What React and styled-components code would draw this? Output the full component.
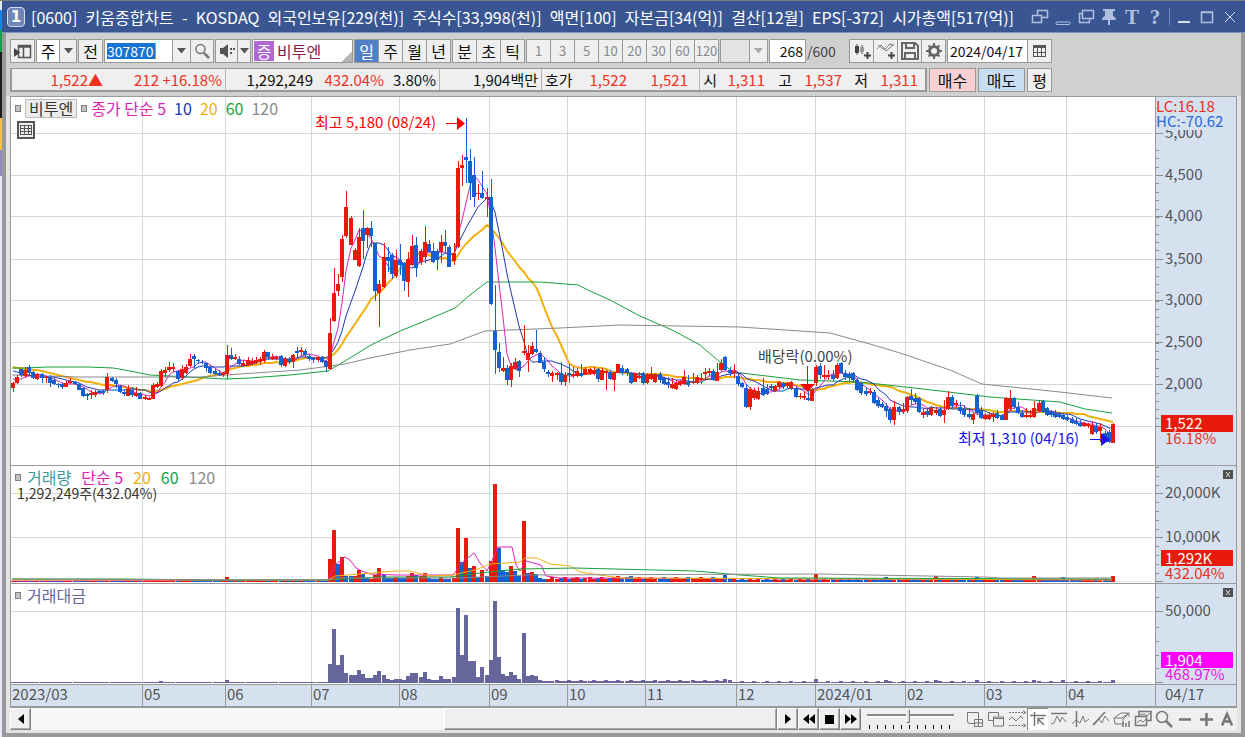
import React, { useState } from "react";
import styled, { createGlobalStyle, css } from "styled-components";

const GlobalStyle = createGlobalStyle`
  * {
    box-sizing: border-box;
  }
  body {
    margin: 0;
    background: #9a9a9a;
  }
  body, button, input, select {
    font-family: "Noto Sans CJK KR", sans-serif;
    font-size: 16px;
    line-height: 20px;
  }
`;

const RED = "#e81a0c";
const BLUE = "#1560d0";
const MAGENTA = "#e022b8";
const NAVY = "#2038b0";
const ORANGE = "#f2b10a";
const GREEN = "#16a03c";
const GRAY = "#8a8a8a";
const PURPLE = "#66669c";
const LINE = "#999";

const Desktop = styled.div`
  min-height: 100vh;
  padding: 1px 0 0 2px;
  background: linear-gradient(
    #7a7a7a 1px,
    #dfe8f4 1px 10px,
    #1a86e0 10px 30px,
    #12a04a 30px 52px,
    #1c1c1c 52px 118px,
    #f2c14e 118px 150px,
    #8f90c0 150px 176px,
    #e4ebf4 176px
  );
`;

const Window = styled.div`
  min-height: calc(100vh - 1px);
  display: flex;
  flex-direction: column;
  background: #999;
`;

const TitleBar = styled.header`
  height: 32px;
  padding: 0 5px 0 5px;
  display: flex;
  align-items: center;
  background: #3a5692;
  border-bottom: 1px solid #7d93c0;
  color: #fff;
`;

const WindowNumber = styled.span`
  width: 18px;
  height: 20px;
  border: 1px solid #d4dcee;
  border-radius: 4px;
  background: #6f86b6;
  font: bold 15px/18px "DejaVu Sans", sans-serif;
  text-align: center;
`;

const TitleText = styled.h1`
  flex: 1;
  margin: 0 16px 0 6px;
  display: flex;
  justify-content: space-between;
  font-size: 16px;
  font-weight: 400;
  white-space: nowrap;
`;

const TitleTools = styled.div`
  display: flex;
  align-items: center;
  gap: 3px;
`;

const TitleButton = styled.button`
  width: 20px;
  height: 24px;
  padding: 0;
  border: 0;
  background: none;
  color: ${(p) => (p.$bright ? "#d6def0" : "#b0bedf")};
  display: flex;
  align-items: center;
  justify-content: center;
  font: bold 21px/24px "Liberation Serif", serif;
`;

const TitleDivider = styled.span`
  width: 1px;
  height: 17px;
  margin: 0 1px;
  background: #7087b8;
`;

const Body = styled.main`
  flex: 1;
  margin: 0 4px 4px;
  padding: 0 4px 3px;
  display: flex;
  flex-direction: column;
  background: #e4e4e4;
`;

const Bars = styled.div`
  margin: 0 -4px;
  padding: 6px 4px 4px;
  display: flex;
  flex-direction: column;
  gap: 5px;
  background: #d0d0d0;
`;

const Bar = styled.div`
  height: 24px;
  display: flex;
  gap: ${(p) => p.$gap || 2}px;
  white-space: nowrap;
`;

const Group = styled.div`
  display: flex;
  border: 1px solid ${LINE};
  background: ${LINE};
  gap: 1px;
`;

const ToolButton = styled.button`
  width: ${(p) => p.$w || 23}px;
  padding: 0;
  border: 0;
  display: flex;
  align-items: center;
  justify-content: center;
  background: #efefef;
  color: #111;
  ${(p) =>
    p.$on &&
    css`
      background: #4f80c6;
      color: #fff;
    `}
  &:disabled {
    color: #888;
    font-size: 13px;
  }
`;

const Field = styled.input`
  width: ${(p) => p.$w}px;
  padding: 0 2px;
  border: 0;
  outline: 0;
  background: #fff;
  color: #111;
  font-size: 14px;
  text-align: ${(p) => p.$align || "left"};
`;

const CodeBox = styled.label`
  width: 67px;
  padding-left: 2px;
  display: flex;
  align-items: center;
  background: #fff;
`;

const CodeInput = styled.input`
  width: 49px;
  height: 16px;
  padding: 0;
  border: 0;
  border-right: 1px solid #e08a2a;
  outline: 0;
  background: #1874d2;
  color: #fff;
  font-size: 14px;
  line-height: 16px;
`;

const Period = styled.span`
  width: 22px;
  display: flex;
  align-items: center;
  justify-content: center;
  background: #fff;
`;

const Stock = styled.div`
  width: 99px;
  padding-left: 1px;
  display: flex;
  align-items: center;
  gap: 3px;
  color: #8c1650;
  background: linear-gradient(135deg, #fff 0 91%, #b4b4b4 91%);
`;

const StockMark = styled.span`
  width: 20px;
  height: 20px;
  background: #b266d6;
  color: #fff;
  text-align: center;
`;

const Disabled = styled.span`
  width: ${(p) => p.$w}px;
  background: #e4e4e4;
`;

const Total = styled.span`
  width: 41px;
  font-size: 14px;
  line-height: 24px;
  color: #444;
`;

const Quote = styled.div`
  flex: 0 1 917px;
  display: flex;
  border: 2px solid ${LINE};
  border-width: 1px 2px 2px;
  background: #efefef;
`;

const QuoteCell = styled.div`
  width: ${(p) => p.$w}px;
  padding: 0 3px;
  display: grid;
  grid-template-columns: ${(p) => p.$cols};
  align-items: center;
  border-right: 1px solid #b4b4b4;
  font-size: 15px;
  text-align: right;
  &:last-child {
    flex: 1;
    border-right: 0;
  }
`;

const Num = styled.span`
  color: ${(p) => (p.$up ? "#f03020" : "#111")};
  ${(p) => p.$left && "text-align: left;"}
`;

const OrderButton = styled.button`
  width: ${(p) => p.$w}px;
  padding: 0;
  border: 1px solid ${LINE};
  background: ${(p) => p.$bg};
  color: #111;
`;

const Chart = styled.section`
  border: 1px solid ${LINE};
  background: #fff;
`;

const Panel = styled.div`
  position: relative;
  height: ${(p) => p.$h}px;
  display: flex;
  border-bottom: 1px solid ${LINE};
`;

const Plot = styled.svg`
  flex: 1;
  min-width: 0;
  height: 100%;
  background: ${(p) => p.$bg || "#fff"};
`;

const Scale = styled.svg`
  flex: 0 0 81px;
  height: 100%;
  background: #d6e1ef;
  border-left: 1px solid ${LINE};
`;

const Label = styled.text`
  font-size: 15px;
  fill: ${(p) => p.fill || "#555"};
`;

const Legend = styled.div`
  position: absolute;
  left: 4px;
  top: 1px;
  display: flex;
  align-items: center;
  gap: ${(p) => p.$gap || 6}px;
  white-space: nowrap;
`;

const Key = styled.span`
  margin-right: 4px;
  color: ${(p) => p.$color};
`;

const Handle = styled.span`
  width: 6px;
  height: 7px;
  border: 1px solid #808080;
  background: #c4c4c4;
`;

const NameTag = styled.span`
  height: 19px;
  padding: 0 3px;
  border: 1px solid #bbb;
  background: #ececec;
  color: #333;
  line-height: 17px;
`;

const GridButton = styled.button`
  position: absolute;
  left: 6px;
  top: 24px;
  width: 18px;
  height: 18px;
  padding: 0;
  border: 2px solid #555;
  background: #eee;
  display: flex;
`;

const VolumeNote = styled.p`
  position: absolute;
  left: 6px;
  top: 17px;
  margin: 0;
  font-size: 14px;
  color: #333;
`;

const CloseButton = styled.button`
  position: absolute;
  right: 3px;
  top: 4px;
  width: 10px;
  height: 9px;
  padding: 0;
  border: 0;
  background: #505050;
  display: flex;
  align-items: center;
  justify-content: center;
`;

const Footer = styled.footer`
  height: 22px;
  display: flex;
  background: #efefef;
`;

const RaisedButton = styled.button`
  flex: none;
  width: 21px;
  padding: 0;
  border: 1px solid;
  border-color: #fff #808080 #808080 #fff;
  box-shadow: inset -1px -1px 0 #aaa;
  background: #efefef;
  display: flex;
  align-items: center;
  justify-content: center;
`;

const Track = styled.div`
  flex: 1;
  display: flex;
  justify-content: flex-end;
  background: #f7f7f7;
`;

const Thumb = styled.div`
  width: 44.6%;
  border: 1px solid;
  border-color: #fff #808080 #808080 #fff;
  box-shadow: inset -1px -1px 0 #aaa;
  background: #efefef;
`;

const Zoom = styled.label`
  width: 103px;
  padding: 0 10px 0 6px;
  display: flex;
  flex-direction: column;
  justify-content: space-between;
`;

const ZoomRange = styled.input`
  appearance: none;
  width: 100%;
  height: 15px;
  margin: 0;
  background: linear-gradient(#fff0 6px, #8a8a8a 6px 8px, #fff 8px 9px, #fff0 9px);
  &::-webkit-slider-thumb {
    appearance: none;
    width: 4px;
    height: 14px;
    border: 1px solid;
    border-color: #fff #777 #777 #fff;
    background: #ddd;
  }
`;

const Ticks = styled.span`
  height: 4px;
  margin: 0 1px 1px 2px;
  background: repeating-linear-gradient(90deg, #111 0 1px, transparent 1px 8px);
`;

const Tools = styled.div`
  display: flex;
`;

const SmallTool = styled.button`
  width: 21px;
  padding: 0;
  border: 0;
  display: flex;
  align-items: center;
  justify-content: center;
  background: ${(p) => (p.$on ? "#fff" : "none")};
  ${(p) => p.$on && "box-shadow: inset 1px 1px 0 #888;"}
  color: #777;
`;

// high, body top, body bottom, low (chart y) and direction, one row per day
const candles = `
382 383 388 392 r|375 377 383 384 r|369 369 375 377 b|367 370 376 378 r|365 367 373 375 b|371 372 378 379 b
373 374 379 380 r|373 374 378 383 b|376 377 378 383 r|375 377 383 387 b|378 380 384 385 b|383 384 385 388 b
383 384 387 389 b|381 383 387 387 r|378 381 383 384 r|381 382 384 385 b|383 384 390 390 b|387 388 396 397 b
393 394 396 400 b|390 393 395 399 r|390 392 395 397 r|390 391 393 393 b|390 391 393 395 b|373 377 390 393 r
377 378 381 382 b|378 380 384 388 b|385 386 392 393 b|390 392 394 396 b|385 389 396 396 r|387 390 395 397 b
387 393 396 397 r|392 393 399 399 b|395 397 399 400 r|397 398 400 400 r|383 385 399 399 r|382 384 387 388 r
369 371 386 387 r|367 370 373 377 r|362 367 370 372 r|363 367 369 372 r|370 371 379 382 b|365 369 378 380 r
364 367 373 374 r|354 359 366 367 r|354 356 359 368 b|359 360 361 364 b|360 362 363 364 b|362 363 368 372 b
365 367 373 374 b|369 371 374 375 b|370 373 375 376 b|372 373 375 377 r|345 355 374 379 r|348 355 359 360 b
354 357 359 360 r|356 359 364 365 b|360 363 366 366 r|357 360 365 366 r|358 361 364 365 r|357 360 363 364 r
357 359 362 365 r|350 352 361 363 r|352 352 357 360 b|354 357 359 360 r|356 357 359 360 r|355 356 365 367 b
357 359 366 367 r|357 359 362 364 b|354 355 362 368 r|347 351 353 359 b|347 350 352 356 r|349 351 355 357 b
354 356 359 361 b|357 358 360 363 b|356 357 360 362 r|356 357 362 363 b|360 361 367 372 b|318 333 369 370 r
268 293 321 322 r|274 284 291 296 r|235 239 277 282 r|191 207 236 238 r|216 218 245 245 r|248 250 260 260 r
228 237 266 267 r|210 228 241 259 b|227 228 235 248 r|221 228 236 247 b|243 243 291 301 b|280 284 293 327 r
243 257 287 288 r|247 257 261 272 b|253 255 274 279 b|250 260 276 278 r|244 260 265 275 b|262 263 281 291 b
252 259 282 297 r|235 246 265 266 r|237 245 268 277 b|249 251 262 265 r|226 242 257 263 r|240 244 252 253 b
243 251 262 263 b|249 251 260 270 b|235 242 252 263 r|230 242 246 253 b|245 247 267 267 b|243 253 261 265 r
161 168 247 248 r|155 165 168 186 r|118 157 160 183 b|149 161 183 200 b|157 175 197 207 b|184 193 194 200 r
171 193 198 199 b|188 197 199 217 r|179 197 304 305 b|285 331 350 374 b|343 352 368 372 b|357 368 371 372 r
365 368 380 385 b|363 366 380 387 r|358 362 369 370 r|360 361 371 377 b|325 351 353 355 r|345 353 360 372 r
342 346 354 355 r|330 349 352 353 b|351 353 363 363 b|357 362 369 372 b|370 372 374 377 b|371 373 376 382 r
372 373 375 380 r|362 373 382 385 b|372 375 382 386 r|364 373 375 383 b|367 374 376 378 r|368 371 376 377 r
364 374 376 377 b|367 369 375 375 r|368 369 374 375 r|367 370 374 375 r|368 369 379 382 b|368 370 380 380 r
370 371 373 390 r|370 372 379 380 b|372 373 380 391 r|364 364 373 373 r|365 368 373 375 b|368 369 373 376 b
372 373 383 384 b|373 373 382 382 r|372 376 378 379 r|372 373 383 385 b|373 375 383 384 r|367 374 379 380 r
373 374 382 383 r|372 374 380 383 b|377 378 384 385 b|377 382 385 388 b|378 384 388 389 r|380 383 389 390 r
380 381 385 386 r|370 377 384 385 r|375 382 385 387 b|373 382 383 384 r|375 377 383 384 r|373 378 380 384 r
368 372 374 380 r|368 371 373 376 r|369 371 380 381 b|363 372 381 381 r|359 363 370 371 r|356 357 370 371 b
367 370 373 376 b|364 371 373 378 r|373 376 384 386 b|382 383 387 388 b|384 388 407 408 b|387 389 407 410 r
388 390 398 400 r|387 391 399 400 r|378 388 395 396 b|384 389 394 395 b|384 386 388 391 b|385 386 391 392 r
381 382 387 389 r|382 383 387 389 b|382 383 386 388 r|381 382 388 390 r|387 388 397 398 b|393 396 397 399 r
391 396 398 400 r|391 398 400 401 b|388 390 401 401 r|365 367 383 386 r|363 366 375 379 b|365 375 377 379 r
370 375 377 380 r|370 375 379 381 b|363 365 378 379 r|362 363 373 373 b|370 373 377 380 b|372 374 378 381 b
372 373 380 383 b|378 380 390 391 b|382 383 393 395 b|388 391 394 396 b|388 391 393 395 r|390 392 403 404 b
398 400 406 408 b|402 404 407 408 b|403 406 411 417 b|407 409 420 423 b|401 407 420 425 r|406 407 412 415 b
403 409 412 414 r|396 397 411 413 r|389 396 400 405 b|393 398 402 404 b|397 398 412 413 b|409 412 415 418 r
408 411 415 417 b|406 408 415 416 r|407 410 413 415 r|407 409 416 417 b|400 410 415 423 r|391 397 409 410 r
395 397 406 408 b|400 403 405 408 r|402 407 411 414 b|405 409 415 417 b|408 414 417 419 b|412 414 420 424 r
394 396 413 415 b|407 410 418 419 b|413 415 419 420 r|412 415 419 420 r|412 414 417 422 r|410 413 418 419 b
414 416 420 420 b|397 398 420 420 r|390 398 409 411 r|397 398 407 409 b|402 407 413 414 b|410 413 417 418 b
408 415 417 418 r|410 415 417 418 r|401 408 417 418 r|400 403 411 412 r|400 401 412 413 b|407 408 415 416 b
410 412 415 417 b|410 413 417 418 b|412 414 417 418 b|413 415 419 420 b|415 417 420 421 b|417 419 423 424 b
418 421 424 425 b|420 423 426 427 b|422 423 426 427 r|423 424 426 428 r|421 425 434 435 r|423 426 432 434 b
423 427 431 442 r|431 433 437 439 b|430 432 442 443 b|423 424 443 443 r`
  .trim()
  .split(/[|\n]/)
  .map((row) => {
    const [high, top, bottom, low, dir] = row.trim().split(" ");
    return { high: +high, top: +top, bottom: +bottom, low: +low, up: dir === "r" };
  });

// volume height, turnover height and volume colour from the July breakout on
const BUSY_FROM = 77;
const busyDays = [
  [23, 19, 1], [52, 54, 1], [18, 18, 0], [25, 28, 1], [6, 10, 0], [6, 8, 0], [6, 8, 1], [12, 13, 1],
  [8, 9, 0], [4, 5, 0], [3, 5, 1], [7, 8, 1], [14, 12, 1], [7, 8, 0], [4, 4, 0], [4, 3, 0], [5, 4, 1],
  [4, 4, 0], [4, 3, 0], [6, 7, 1], [9, 10, 1], [7, 10, 0], [6, 6, 1], [9, 11, 1], [4, 4, 0], [3, 3, 0],
  [3, 3, 0], [5, 7, 1], [3, 4, 0], [3, 4, 0], [4, 6, 1], [54, 75, 1], [20, 28, 0], [44, 68, 1],
  [14, 22, 0], [16, 22, 1], [5, 6, 0], [12, 16, 1], [6, 8, 0], [21, 23, 1], [98, 82, 1], [34, 26, 0],
  [12, 9, 0], [10, 7, 0], [16, 11, 1], [11, 8, 0], [6, 4, 0], [61, 50, 1], [9, 7, 0], [10, 8, 1],
  [8, 7, 0], [4, 3, 0], [3, 2, 0], [3, 2, 1],
];
const spikes = { 36: 3, 52: 5, 147: 6, 150: 6, 173: 7, 195: 8, 212: 5, 224: 6, 234: 5, 248: 6, 255: 5, 267: 6 };

const days = candles.map((c, i) => {
  const busy = busyDays[i - BUSY_FROM];
  if (busy) return { vol: busy[0], amount: busy[1], up: busy[2] === 1 };
  const quiet = i < BUSY_FROM ? 1 : i < 175 ? 3 + ((i * 7) % 3) : 2 + ((i * 5) % 2);
  const amount = i < BUSY_FROM ? 1 : i < 175 ? 2 + ((i * 7) % 3 === 0) : 1 + ((i * 5) % 3 === 0);
  return { vol: spikes[i] || quiet, amount: spikes[i] ? Math.ceil(spikes[i] / 2) : amount, up: c.up };
});

const dayX = (i) => Math.round(12.7 + i * 4.12);

const closes = [...Array(16).fill(363), 370, 378, 380, 382, ...candles.map((c) => (c.up ? c.top : c.bottom))];
const average = (n) =>
  candles
    .map((c, i) => {
      const part = closes.slice(i + 21 - n, i + 21);
      return `${dayX(i)},${Math.round(part.reduce((a, b) => a + b, 0) / n)}`;
    })
    .join(" ");

const price60 =
  "12,368 24,368 48,367 88,367 113,368 125,370 150,375 188,377 225,379 250,378 290,375 328,371 345,361 371,345 400,331 420,323 455,308 470,295 487,282 540,282 578,285 590,291 610,300 640,316 672,330 700,345 715,358 733,372 800,380 860,382 905,387 940,391 990,397 1060,402 1085,409 1112,413";
const price120 =
  "12,375 80,377 200,377 240,374 300,370 345,364 370,358 410,350 450,344 485,331 560,328 620,325 680,326 740,327 830,333 870,344 900,353 950,370 982,384 1060,392 1112,398";
const volume5 =
  "12,581 328,580 335,565 345,557 350,560 356,568 362,571 370,574 395,575 453,575 462,563 474,553 480,563 487,571 494,556 498,547 512,547 516,565 520,571 526,561 541,565 546,576 560,578 820,579 1112,580";
const volume20 =
  "12,580 328,580 335,576 360,574 395,571 410,571 430,576 453,575 475,570 490,564 520,562 525,558 537,558 550,564 570,566 580,572 600,575 620,578 1112,580";
const volume60 =
  "12,579 122,579 205,580 328,580 380,577 450,577 480,573 520,569 575,568 695,571 740,575 780,578 1112,579";
const volume120 = "12,579 328,580 340,578 460,578 525,575 820,574 870,575 985,577 1000,578 1112,578";

const months = [
  [142, "05"], [225, "06"], [311, "07"], [399, "08"], [489, "09"], [567, "10"],
  [645, "11"], [736, "12"], [815, "2024/01"], [905, "02"], [984, "03"], [1066, "04"],
];

const prices = [
  [133, "5,000"], [175, "4,500"], [216, "4,000"], [259, "3,500"],
  [300, "3,000"], [342, "2,500"], [384, "2,000"], [426, ""],
];

const range = (from, to, step) => {
  const out = [];
  for (let v = from; v <= to; v += step) out.push(Math.round(v));
  return out;
};

function Grid({ rows, top, height }) {
  return (
    <g stroke="#d6d6d6" shapeRendering="crispEdges">
      {rows.map((y) => (
        <line key={y} x1="11" x2="1153" y1={y + 0.5} y2={y + 0.5} />
      ))}
      {months.map(([x]) => (
        <line key={x} x1={x + 0.5} x2={x + 0.5} y1={top} y2={top + height} />
      ))}
    </g>
  );
}

function Average({ points, color, width = 1 }) {
  return <polyline points={points} fill="none" stroke={color} strokeWidth={width} strokeLinejoin="round" />;
}

function ScaleTicks({ minor, major }) {
  return (
    <g stroke="#8c8c8c" shapeRendering="crispEdges">
      {minor.map((y) => (
        <line key={y} x1="0" x2="3" y1={y + 0.5} y2={y + 0.5} />
      ))}
      {major.map((y) => (
        <line key={y} x1="0" x2="7" y1={y + 0.5} y2={y + 0.5} />
      ))}
    </g>
  );
}

function PanelClose() {
  return (
    <CloseButton aria-label="닫기">
      <svg width="6" height="5" viewBox="0 0 6 5" stroke="#ddd">
        <path d="M1 0l4 5M5 0L1 5" />
      </svg>
    </CloseButton>
  );
}

function PricePanel() {
  return (
    <Panel $h={369}>
      <Plot>
        <g transform="translate(-11 -97)">
          <Grid rows={prices.map((p) => p[0])} top={97} height={368} />
          <Average points={average(20)} color={ORANGE} width={2} />
          <Average points={price60} color={GREEN} />
          <Average points={price120} color={GRAY} />
          <Average points={average(5)} color={MAGENTA} />
          <Average points={average(10)} color={NAVY} />
          <g shapeRendering="crispEdges">
            {candles.map((c, i) => (
              <g key={i} fill={c.up ? RED : BLUE}>
                <rect x={dayX(i)} y={c.high} width="1" height={c.low - c.high} />
                <rect x={dayX(i) - 2} y={c.top} width="4" height={Math.max(c.bottom - c.top, 1)} />
              </g>
            ))}
          </g>
          <Label x="315" y="128" fill="#f00">최고 5,180 (08/24)</Label>
          <path d="M446 123.5h12" stroke="#f00" />
          <path d="M457 117l8 6.500-8 6.500z" fill="#f00" />
          <Label x="758" y="362" fill="#444">배당락(0.00%)</Label>
          <path d="M807.500 366v19" stroke="#f00" />
          <path d="M800 384h15l-7.500 8z" fill="#f00" />
          <Label x="958" y="444" fill="#1414f0">최저 1,310 (04/16)</Label>
          <path d="M1090 439.500h12" stroke="#1414f0" />
          <path d="M1101 433l9 6.500-9 6.500z" fill="#1414f0" />
        </g>
      </Plot>
      <Scale>
        <g transform="translate(0 -97)">
          <ScaleTicks minor={range(150, 424, 8.37)} major={prices.map((p) => p[0])} />
          {prices.map(([y, text]) => (
            <Label key={y} x="9" y={y + 5}>{text}</Label>
          ))}
          <rect x="0" y="97" width="81" height="33" fill="#d6e1ef" />
          <Label x="0" y="112" fill="#e83020">LC:16.18</Label>
          <Label x="0" y="127" fill="#2a68d8">HC:-70.62</Label>
          <rect x="5" y="415" width="72" height="17" fill={RED} />
          <Label x="9" y="429" fill="#fff">1,522</Label>
          <Label x="9" y="444" fill="#e83020">16.18%</Label>
        </g>
      </Scale>
      <Legend $gap={4}>
        <Handle />
        <NameTag>비투엔</NameTag>
        <Handle />
        <Key $color={MAGENTA}>종가 단순 5</Key>
        <Key $color={NAVY}>10</Key>
        <Key $color={ORANGE}>20</Key>
        <Key $color={GREEN}>60</Key>
        <Key $color={GRAY}>120</Key>
      </Legend>
      <GridButton aria-label="데이터 표">
        <svg width="14" height="14" viewBox="0 0 14 14" stroke="#555" fill="none" shapeRendering="crispEdges">
          <path d="M1.500 2.500h11v9h-11zM1.500 5.500h11M1.500 8.500h11M5.500 2.500v9M9.500 2.500v9" />
        </svg>
      </GridButton>
    </Panel>
  );
}

function VolumePanel() {
  return (
    <Panel $h={118}>
      <Plot>
        <g transform="translate(-11 -466)">
          <Grid rows={[493, 537]} top={466} height={117} />
          <path d="M11 581.500h1142" stroke="#ccc" strokeDasharray="1 1" />
          <g shapeRendering="crispEdges">
            {days.map((d, i) => (
              <rect key={i} x={dayX(i) - 2} y={582 - d.vol} width="4" height={d.vol} fill={d.up ? RED : BLUE} />
            ))}
          </g>
          <Average points={volume5} color={MAGENTA} />
          <Average points={volume20} color={ORANGE} />
          <Average points={volume60} color={GREEN} />
          <Average points={volume120} color={GRAY} />
        </g>
      </Plot>
      <Scale>
        <g transform="translate(0 -466)">
          <ScaleTicks minor={range(467, 581, 8.8)} major={[493, 537, 581]} />
          <Label x="9" y="498">20,000K</Label>
          <Label x="9" y="542">10,000K</Label>
          <rect x="5" y="550" width="72" height="16" fill={RED} />
          <Label x="9" y="564" fill="#fff">1,292K</Label>
          <Label x="9" y="579" fill="#e83020">432.04%</Label>
        </g>
      </Scale>
      <Legend>
        <Handle />
        <Key $color="#3a9a9e">거래량</Key>
        <Key $color={MAGENTA}>단순 5</Key>
        <Key $color={ORANGE}>20</Key>
        <Key $color={GREEN}>60</Key>
        <Key $color={GRAY}>120</Key>
      </Legend>
      <VolumeNote>1,292,249주(432.04%)</VolumeNote>
      <PanelClose />
    </Panel>
  );
}

function AmountPanel() {
  return (
    <Panel $h={101}>
      <Plot>
        <g transform="translate(-11 -584)">
          <Grid rows={[611]} top={584} height={100} />
          <path d="M11 682.500h1142" stroke="#ccc" strokeDasharray="1 1" />
          <g fill={PURPLE} shapeRendering="crispEdges">
            {days.map((d, i) => (
              <rect key={i} x={dayX(i) - 2} y={683 - d.amount} width="4" height={d.amount} />
            ))}
          </g>
        </g>
      </Plot>
      <Scale>
        <g transform="translate(0 -584)">
          <ScaleTicks minor={[597, 627, 641, 655, 668]} major={[611, 682]} />
          <Label x="9" y="616">50,000</Label>
          <rect x="5" y="652" width="72" height="16" fill="#f0f" />
          <Label x="9" y="666" fill="#fff">1,904</Label>
          <Label x="9" y="680" fill="#f010e0">468.97%</Label>
        </g>
      </Scale>
      <Legend>
        <Handle />
        <Key $color={PURPLE}>거래대금</Key>
      </Legend>
      <PanelClose />
    </Panel>
  );
}

function DateAxis() {
  return (
    <Panel $h={22}>
      <Plot $bg="#d6e1ef">
        <Label x="1" y="15">2023/03</Label>
        {months.map(([x, text]) => (
          <g key={x}>
            <line x1={x - 10.5} x2={x - 10.5} y1="0" y2="22" stroke={LINE} shapeRendering="crispEdges" />
            <Label x={x - 9} y="15">{text}</Label>
          </g>
        ))}
      </Plot>
      <Scale>
        <Label x="9" y="15">04/17</Label>
      </Scale>
    </Panel>
  );
}

const Icon = ({ children, size = 18, ...rest }) => (
  <svg width={size} height={size} viewBox="0 0 18 18" fill="none" stroke="currentColor" {...rest}>
    {children}
  </svg>
);

const Arrow = ({ color = "#555" }) => (
  <svg width="9" height="6" viewBox="0 0 9 6">
    <path d="M0 0h9L4.500 5.500z" fill={color} />
  </svg>
);

const titleParts = [
  "[0600]", "키움종합차트", "-", "KOSDAQ", "외국인보유[229(천)]", "주식수[33,998(천)]",
  "액면[100]", "자본금[34(억)]", "결산[12월]", "EPS[-372]", "시가총액[517(억)]",
];

function Title() {
  return (
    <TitleBar>
      <WindowNumber>1</WindowNumber>
      <TitleText>
        {titleParts.map((t) => (
          <span key={t}>{t}</span>
        ))}
      </TitleText>
      <TitleTools>
        <TitleButton aria-label="화면 교체">
          <Icon><path d="M1.500 7.500h9v7h-9zM6.500 7V2.500h10v7h-5.500" strokeWidth="1.5" /></Icon>
        </TitleButton>
        <TitleButton aria-label="접기">
          <Icon><rect x="2" y="14" width="14" height="2.500" rx="1" /></Icon>
        </TitleButton>
        <TitleButton aria-label="복제">
          <Icon><path d="M5.500 2.500h11v8h-11zM5 5.500H2.500v9h10V11" strokeWidth="1.5" /></Icon>
        </TitleButton>
        <TitleButton aria-label="고정">
          <Icon fill="currentColor" stroke="none">
            <path d="M3 1h12v2h-2v5q3 1 3 4h-6v5H8v-5H2q0-3 3-4V3H3z" />
          </Icon>
        </TitleButton>
        <TitleButton aria-label="글자">T</TitleButton>
        <TitleButton aria-label="도움말">?</TitleButton>
        <TitleDivider />
        <TitleButton $bright aria-label="최소화">
          <Icon><path d="M3 14h12" strokeWidth="2" /></Icon>
        </TitleButton>
        <TitleButton aria-label="최대화">
          <Icon><path d="M3.500 4.500h11v10h-11zM3 4h12" strokeWidth="1.500" /></Icon>
        </TitleButton>
        <TitleButton $bright aria-label="닫기">
          <Icon><path d="M4 4l10 10M14 4L4 14" /></Icon>
        </TitleButton>
      </TitleTools>
    </TitleBar>
  );
}

const minutes = ["1", "3", "5", "10", "20", "30", "60", "120"];

function Toolbar() {
  const [code, setCode] = useState("307870");
  const [date, setDate] = useState("2024/04/17");
  const [unit, setUnit] = useState("일");
  return (
    <Bar $gap={1}>
      <Group>
        <ToolButton aria-label="메뉴 열기">
          <Icon stroke="#555">
            <path d="M4.500 3.500h12v12h-12zM4 5h13M9.500 5v10" strokeWidth="1.500" />
            <path d="M0 6l6 4.500L0 15z" fill="#444" stroke="none" />
          </Icon>
        </ToolButton>
      </Group>
      <Group>
        <Period>주</Period>
        <ToolButton $w={16} aria-label="종목 구분"><Arrow /></ToolButton>
      </Group>
      <Group>
        <ToolButton>전</ToolButton>
      </Group>
      <Group>
        <CodeBox>
          <CodeInput aria-label="종목코드" value={code} onChange={(e) => setCode(e.target.value)} />
        </CodeBox>
        <ToolButton $w={17} aria-label="종목 이력"><Arrow /></ToolButton>
        <ToolButton $w={22} aria-label="종목 검색">
          <Icon stroke="#777"><circle cx="7.500" cy="7" r="4.500" strokeWidth="1.500" /><path d="M11 11l5 5" strokeWidth="2.500" /></Icon>
        </ToolButton>
      </Group>
      <Group>
        <ToolButton $w={21} aria-label="소리">
          <Icon fill="#555" stroke="none"><path d="M2 6h3l5-4v14l-5-4H2zM12 6h2v2h-2zM15 6h2v2h-2zM12 10h2v2h-2z" /></Icon>
        </ToolButton>
        <ToolButton $w={12} aria-label="소리 설정"><Arrow /></ToolButton>
      </Group>
      <Group>
        <Stock><StockMark>증</StockMark>비투엔</Stock>
      </Group>
      <Group>
        {["일", "주", "월", "년"].map((u) => (
          <ToolButton key={u} $on={unit === u} onClick={() => setUnit(u)}>{u}</ToolButton>
        ))}
      </Group>
      <Group>
        {["분", "초", "틱"].map((u) => (
          <ToolButton key={u} $on={unit === u} onClick={() => setUnit(u)}>{u}</ToolButton>
        ))}
      </Group>
      <Group>
        {minutes.map((m) => (
          <ToolButton key={m} disabled>{m}</ToolButton>
        ))}
      </Group>
      <Group>
        <Disabled $w={28} />
        <ToolButton $w={17} disabled aria-label="분 선택"><Arrow color="#aaa" /></ToolButton>
      </Group>
      <Group>
        <Field $w={35} $align="right" aria-label="표시 개수" defaultValue="268" />
      </Group>
      <Total>/600</Total>
      <Group>
        <ToolButton aria-label="캔들 추가">
          <Icon>
            <path d="M4 2v11M9 3v9" stroke="#555" />
            <path d="M2 4h4v7H2z" fill="#444" stroke="none" />
            <path d="M7 5h4v5H7z" fill="#999" stroke="none" />
            <path d="M11 13.500h7M14.500 10v7" stroke="#444" strokeWidth="2" />
          </Icon>
        </ToolButton>
        <ToolButton aria-label="지표 추가">
          <Icon>
            <path d="M0 7l4-4 4 4 5-5 4 1M1 3l8 6 7-6" stroke="#777" />
            <path d="M11 13.500h7M14.500 10v7" stroke="#444" strokeWidth="2" />
          </Icon>
        </ToolButton>
        <ToolButton aria-label="저장">
          <Icon stroke="#666" strokeWidth="2"><path d="M1 1h13l3 3v13H1zM5 1v5h8V1M4 17v-6h10v6" /></Icon>
        </ToolButton>
        <ToolButton aria-label="설정">
          <Icon stroke="#666">
            <circle cx="9" cy="9" r="4.500" strokeWidth="3" />
            <path d="M9 1v3M9 14v3M1 9h3M14 9h3M3.500 3.500l2 2M12.500 12.500l2 2M14.500 3.500l-2 2M5.500 12.500l-2 2" strokeWidth="2" />
          </Icon>
        </ToolButton>
      </Group>
      <Group>
        <Field $w={79} aria-label="기준일" value={date} onChange={(e) => setDate(e.target.value)} />
        <ToolButton aria-label="달력">
          <Icon stroke="#555" shapeRendering="crispEdges">
            <path d="M2 4h13" strokeWidth="3" />
            <path d="M2.500 3.500h12v11h-12zM2.500 10.500h12M6.500 5v10M10.500 5v10" />
          </Icon>
        </ToolButton>
      </Group>
    </Bar>
  );
}

function QuoteBar() {
  return (
    <Bar>
      <Quote>
        <QuoteCell $w={214} $cols="88px 1fr 63px">
          <Num $up>1,522▲</Num>
          <Num $up>212</Num>
          <Num $up>+16.18%</Num>
        </QuoteCell>
        <QuoteCell $w={214} $cols="84px 1fr 52px">
          <Num>1,292,249</Num>
          <Num $up>432.04%</Num>
          <Num>3.80%</Num>
        </QuoteCell>
        <QuoteCell $w={102} $cols="1fr">
          <Num>1,904백만</Num>
        </QuoteCell>
        <QuoteCell $w={158} $cols="32px 50px 61px">
          <Num $left>호가</Num>
          <Num $up>1,522</Num>
          <Num $up>1,521</Num>
        </QuoteCell>
        <QuoteCell $cols="14px 48px 27px 50px 26px 50px">
          <Num>시</Num>
          <Num $up>1,311</Num>
          <Num>고</Num>
          <Num $up>1,537</Num>
          <Num>저</Num>
          <Num $up>1,311</Num>
        </QuoteCell>
      </Quote>
      <OrderButton $w={47} $bg="#f8d0d0">매수</OrderButton>
      <OrderButton $w={47} $bg="#c8dcf2">매도</OrderButton>
      <OrderButton $w={25} $bg="#efefef">평</OrderButton>
    </Bar>
  );
}

const chartTools = [
  ["창 추가", <path key="a" d="M9 13.500H4q-2.500 0-2.500-2.500V2.500h11V9M8.500 9.500h8v7h-8zM12.500 9.500v7M8.500 13h8" />],
  ["겹치기", <path key="a" d="M7 10.500H1.500v-8h10V6M6.500 7h10v9h-10zM6.500 8.500h10" />],
  ["구간", <path key="a" d="M1 2.500h16M1 15.500h16" strokeDasharray="2 1" />, <path key="b" d="M1 10l3-3 4 4 5-5 2 3M15 1l3 1.500-3 1.500M15 14l3 1.500-3 1.500" />],
  ["십자선", <path key="a" d="M1 5.500h16M5.500 2v14" strokeWidth="1.500" />, <path key="b" d="M15 15l-6-6M9 14V8.500h6" strokeWidth="1.500" />],
  ["수평선", <path key="a" d="M1 3.500h16" strokeWidth="1.500" />, <path key="b" d="M1 14l3-1 3-7 3 6 2-5 4 5" />],
  ["수직선", <path key="a" d="M5.500 1v16" strokeWidth="1.500" />, <path key="b" d="M1 14l4-4 4 3 3-7 2 6 4-3" />],
  ["추세선", <path key="a" d="M1 15L13 2" strokeWidth="1.500" />, <path key="b" d="M2 15l5-6 3 4 3-7 4 5" />],
  ["지우개", <path key="a" d="M1 8l7-5h8l-6 6v5H2zM1 8h8l7-5v4" />, <path key="b" d="M10 17v-5M13 17v-4M16 17v-6" strokeWidth="1.500" />],
  ["차트 비교", <path key="a" d="M5 6V1.500h12v9h-4M1.500 6.500h11v9h-11z" strokeWidth="1.500" />, <path key="b" d="M3 13l3-3 3 2 3-3M6 5l4-1 3 2 3-3" />],
  ["돋보기", <g key="a"><circle cx="7" cy="7" r="5.500" strokeWidth="1.500" /><path d="M11 11l6 6" strokeWidth="2.500" /></g>],
  ["축소", <path key="a" d="M3 9.500h12" strokeWidth="2.500" />],
  ["확대", <path key="a" d="M3 9.500h13M9.500 3v13" strokeWidth="2.500" />],
];

function Controls() {
  return (
    <Footer>
      <RaisedButton aria-label="왼쪽으로"><svg width="6" height="10"><path d="M6 0v10L0 5z" /></svg></RaisedButton>
      <Track>
        <Thumb />
      </Track>
      <RaisedButton aria-label="오른쪽으로"><svg width="6" height="10"><path d="M0 0v10l6-5z" /></svg></RaisedButton>
      <RaisedButton aria-label="뒤로"><svg width="12" height="10"><path d="M6 0v10L0 5zM12 0v10L6 5z" /></svg></RaisedButton>
      <RaisedButton aria-label="정지"><svg width="9" height="9"><path d="M0 0h9v9H0z" /></svg></RaisedButton>
      <RaisedButton aria-label="앞으로"><svg width="12" height="10"><path d="M0 0v10l6-5zM6 0v10l6-5z" /></svg></RaisedButton>
      <Zoom>
        <ZoomRange type="range" aria-label="확대 비율" min="0" max="100" defaultValue="47" />
        <Ticks />
      </Zoom>
      <Tools>
        {chartTools.map(([name, ...shape]) => (
          <SmallTool key={name} aria-label={name} $on={name === "십자선"}>
            <Icon>{shape}</Icon>
          </SmallTool>
        ))}
        <SmallTool aria-label="자동">
          <Icon><path d="M4 15.500L9 4l5 11.500M6 11.500h6" strokeWidth="2.500" /></Icon>
        </SmallTool>
      </Tools>
    </Footer>
  );
}

export default function App() {
  return (
    <>
      <GlobalStyle />
      <Desktop>
        <Window>
          <Title />
          <Body>
            <Bars>
              <Toolbar />
              <QuoteBar />
            </Bars>
            <Chart>
              <PricePanel />
              <VolumePanel />
              <AmountPanel />
              <DateAxis />
            </Chart>
            <Controls />
          </Body>
        </Window>
      </Desktop>
    </>
  );
}
